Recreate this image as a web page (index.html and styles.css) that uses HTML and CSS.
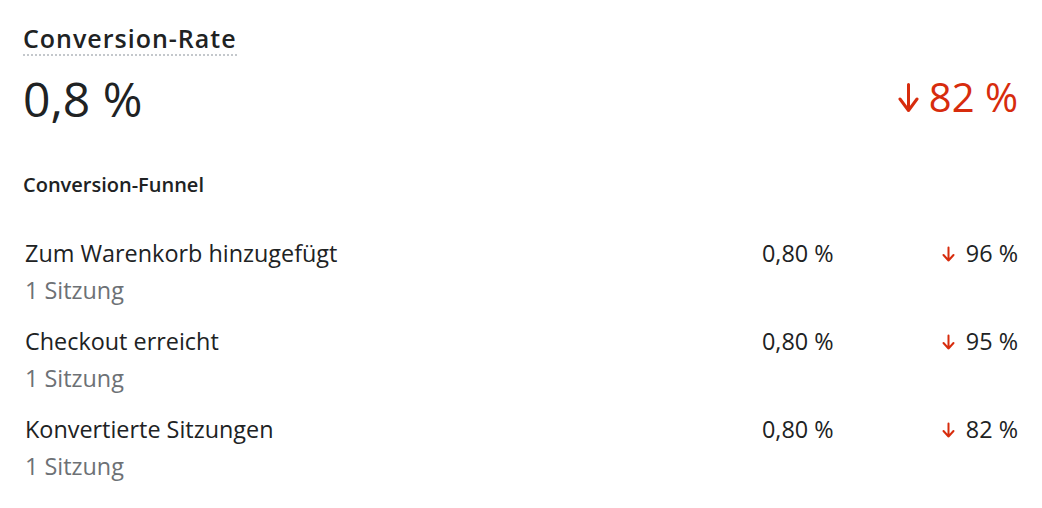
FILE: index.html
```html
<!DOCTYPE html>
<html lang="de">
<head>
<meta charset="utf-8">
<title>Conversion-Rate</title>
<link rel="stylesheet" href="styles.css">
</head>
<body>
<section class="card">
  <h2 class="title">Conversion-Rate</h2>
  <div class="headline">
    <div class="value">0,8 %</div>
    <div class="delta">
      <svg class="arrow-big" viewBox="0 0 21 29" aria-hidden="true"><path d="M10.5 1.5V27.5M2 16L10.5 27.5L19 16"/></svg>
      <span>82 %</span>
    </div>
  </div>
  <h3 class="subtitle">Conversion-Funnel</h3>
  <div class="funnel">
    <div class="row">
      <div class="label">
        <div class="name">Zum Warenkorb hinzugefügt</div>
        <div class="sub">1 Sitzung</div>
      </div>
      <div class="pct">0,80 %</div>
      <div class="change"><svg class="arrow-small" viewBox="0 0 13 16" aria-hidden="true"><path d="M6.5 1.5V14.5M1.5 9L6.5 14.5L11.5 9"/></svg><span>96 %</span></div>
    </div>
    <div class="row">
      <div class="label">
        <div class="name">Checkout erreicht</div>
        <div class="sub">1 Sitzung</div>
      </div>
      <div class="pct">0,80 %</div>
      <div class="change"><svg class="arrow-small" viewBox="0 0 13 16" aria-hidden="true"><path d="M6.5 1.5V14.5M1.5 9L6.5 14.5L11.5 9"/></svg><span>95 %</span></div>
    </div>
    <div class="row">
      <div class="label">
        <div class="name">Konvertierte Sitzungen</div>
        <div class="sub">1 Sitzung</div>
      </div>
      <div class="pct">0,80 %</div>
      <div class="change"><svg class="arrow-small" viewBox="0 0 13 16" aria-hidden="true"><path d="M6.5 1.5V14.5M1.5 9L6.5 14.5L11.5 9"/></svg><span>82 %</span></div>
    </div>
  </div>
</section>
</body>
</html>
```
FILE: styles.css
```css
* { box-sizing: border-box; }
html, body { margin: 0; background: #ffffff; }
body {
  font-family: "Open Sans", "Noto Sans", "Liberation Sans", sans-serif;
  color: #202223;
}
.card {
  width: 1042px;
  padding: 22px 24px 0 23px;
}
.title {
  display: inline-block;
  margin: 0;
  font-size: 25px;
  font-weight: 600;
  letter-spacing: 1px;
  line-height: 32px;
  border-bottom: 2px dotted #c4c8cc;
}
.headline {
  display: flex;
  justify-content: space-between;
  align-items: flex-start;
  margin-top: 11px;
  height: 64px;
}
.value {
  font-size: 48px;
  font-weight: 400;
  line-height: 64px;
}
.delta {
  display: flex;
  align-items: baseline;
  gap: 10px;
  color: #d72c0d;
  font-size: 40px;
  line-height: 59px;
}
.arrow-big { width: 21px; height: 29px; }
.arrow-big path, .arrow-small path {
  fill: none;
  stroke: #d72c0d;
  stroke-linecap: round;
  stroke-linejoin: round;
}
.arrow-big path { stroke-width: 3; }
.arrow-small path { stroke-width: 2; }
.subtitle {
  margin: 42px 0 0;
  font-size: 20px;
  font-weight: 600;
  line-height: 24px;
}
.funnel {
  display: flex;
  flex-direction: column;
  gap: 14px;
  margin-top: 38px;
}
.row {
  display: grid;
  grid-template-columns: 1fr 120px 136px;
  align-items: start;
  padding-left: 2px;
}
.name, .sub, .pct, .change {
  font-size: 23.4px;
  line-height: 37px;
}
.sub { color: #6d7175; }
.change {
  display: flex;
  justify-content: flex-end;
  align-items: baseline;
  gap: 11px;
}
.arrow-small { width: 13px; height: 16px; margin-bottom: -1px; }
```
